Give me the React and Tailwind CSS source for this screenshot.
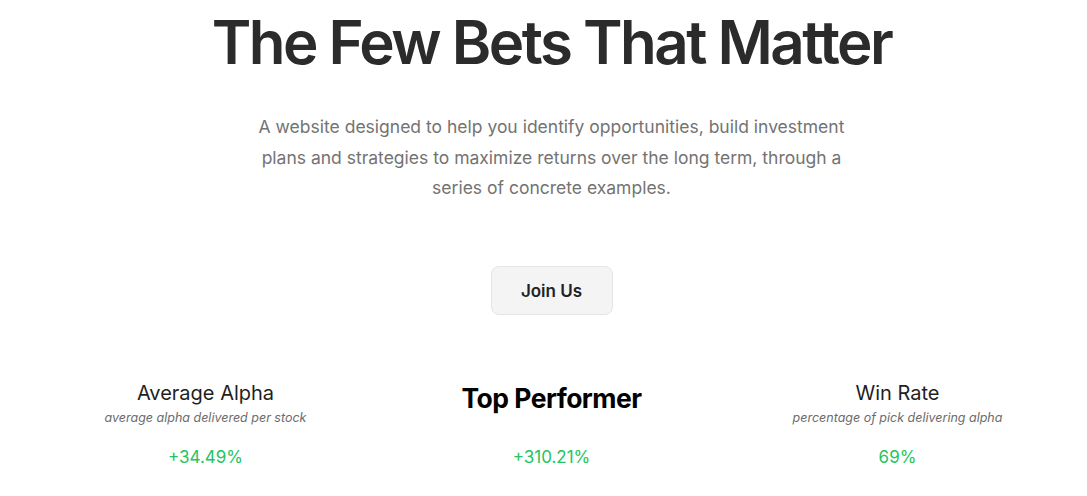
import React from "react";

export default function App() {
  const font = { fontFamily: "Inter, 'Noto Sans', sans-serif" };
  return (
    <div className="min-h-[496px] bg-white pl-4 flex flex-col items-center" style={font}>
      <h1 className="mt-[6px] text-[60px] leading-[72px] font-semibold tracking-[-0.042em] text-[#2b2b2b]">
        The Few Bets That Matter
      </h1>
      <p className="mt-[34px] w-[610px] text-center text-[17.5px] leading-[30.5px] text-[#737373]">
        A website designed to help you identify opportunities, build investment plans and strategies to maximize returns over the long term, through a series of concrete examples.
      </p>
      <button className="mt-[62px] h-[49px] w-[122px] rounded-lg border border-[#e5e5e5] bg-[#f4f4f4] pt-[3px] text-[17px] font-semibold text-[#222]">
        Join Us
      </button>
      <div className="mt-[64px] grid w-[1038px] grid-cols-3">
        <div className="flex flex-col items-center">
          <div className="text-[20px] leading-[28px] text-[#1f1f1f]">Average Alpha</div>
          <div className="mt-[2px] text-[12.5px] italic leading-[17px] text-[#6b6b6b]">average alpha delivered per stock</div>
          <div className="mt-[19px] text-[17px] leading-[24px] text-[#22c55e]">+34.49%</div>
        </div>
        <div className="flex flex-col items-center">
          <div className="mt-[1px] text-[26.5px] leading-[36px] font-bold tracking-[-0.02em] text-black">Top Performer</div>
          <div className="mt-[29px] text-[17px] leading-[24px] text-[#22c55e]">+310.21%</div>
        </div>
        <div className="flex flex-col items-center">
          <div className="text-[20px] leading-[28px] text-[#1f1f1f]">Win Rate</div>
          <div className="mt-[2px] text-[12.5px] italic leading-[17px] text-[#6b6b6b]">percentage of pick delivering alpha</div>
          <div className="mt-[19px] text-[17px] leading-[24px] text-[#22c55e]">69%</div>
        </div>
      </div>
    </div>
  );
}
